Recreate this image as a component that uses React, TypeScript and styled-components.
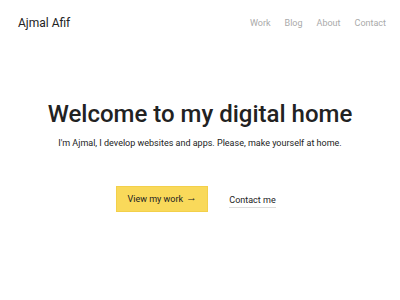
import React from "react";
import styled, { createGlobalStyle } from "styled-components";

const Global = createGlobalStyle`
  html, body { margin: 0; padding: 0; background: #fff; }
  body { font-family: Roboto, "Noto Sans", sans-serif; color: #222; }
  * { box-sizing: border-box; }
`;

const Page = styled.div`
  width: 400px;
  height: 300px;
  display: flex;
  flex-direction: column;
`;

const Header = styled.header`
  display: flex;
  align-items: center;
  justify-content: space-between;
  padding: 13px 14px 0 18px;
  height: 32px;
`;

const Logo = styled.div`
  font-size: 12px;
  color: #222;
`;

const Nav = styled.nav`
  display: flex;
  gap: 14px;
`;

const NavLink = styled.a`
  font-size: 9px;
  color: #aaa;
  text-decoration: none;
`;

const Hero = styled.main`
  display: flex;
  flex-direction: column;
  align-items: center;
  padding-top: 67px;
`;

const Title = styled.h1`
  margin: 0;
  font-size: 24px;
  font-weight: 500;
  color: #222;
  line-height: 30px;
`;

const Subtitle = styled.p`
  margin: 8px 0 0;
  font-size: 9px;
  color: #222;
  line-height: 12px;
`;

const Actions = styled.div`
  display: flex;
  align-items: center;
  gap: 21px;
  margin-top: 37px;
  margin-right: 8px;
`;

const Primary = styled.a`
  display: flex;
  align-items: center;
  justify-content: center;
  gap: 3px;
  width: 92px;
  height: 26px;
  background: #f9d95a;
  border: 1px solid #f3d04a;
  font-size: 9px;
  color: #222;
  text-decoration: none;
`;

const Arrow = styled.span`
  font-size: 11px;
  line-height: 1;
  margin-bottom: 3px;
`;

const Secondary = styled.a`
  font-size: 9px;
  line-height: 11px;
  color: #222;
  text-decoration: none;
  margin-top: 4px;
  padding-bottom: 1px;
  border-bottom: 1px solid #ddd;
`;

export default function App() {
  return (
    <Page>
      <Global />
      <Header>
        <Logo>Ajmal Afif</Logo>
        <Nav>
          <NavLink>Work</NavLink>
          <NavLink>Blog</NavLink>
          <NavLink>About</NavLink>
          <NavLink>Contact</NavLink>
        </Nav>
      </Header>
      <Hero>
        <Title>Welcome to my digital home</Title>
        <Subtitle>I'm Ajmal, I develop websites and apps. Please, make yourself at home.</Subtitle>
        <Actions>
          <Primary>
            View my work <Arrow>→</Arrow>
          </Primary>
          <Secondary>Contact me</Secondary>
        </Actions>
      </Hero>
    </Page>
  );
}
